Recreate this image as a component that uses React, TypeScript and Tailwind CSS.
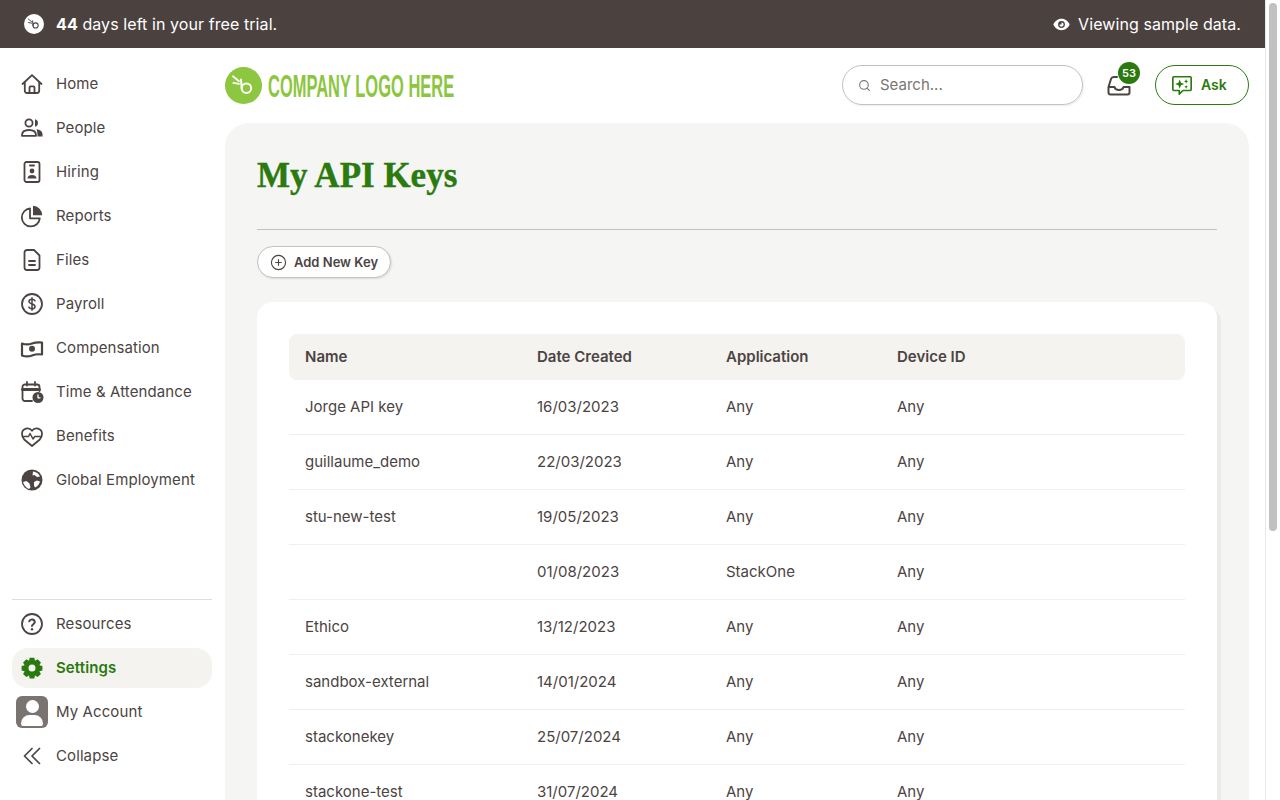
import { CirclePlus, Search } from "lucide-react";
import type { ReactNode } from "react";

const Icon = ({ children, className = "" }: { children: ReactNode; className?: string }) => (
  <svg viewBox="0 0 24 24" className={`w-6 h-6 ${className}`} fill="none" stroke="currentColor" strokeWidth="1.8" strokeLinecap="round" strokeLinejoin="round">
    {children}
  </svg>
);

const navIcons: Record<string, ReactNode> = {
  Home: (
    <Icon>
      <path d="M2.500 12 12 3.200 21.500 12" />
      <path d="M4.800 10.500v8.300a2.200 2.200 0 0 0 2.200 2.200h10a2.200 2.200 0 0 0 2.200-2.200v-8.300" />
      <path d="M9.500 21v-5.500a1.200 1.200 0 0 1 1.200-1.200h2.600a1.200 1.200 0 0 1 1.200 1.200V21" />
    </Icon>
  ),
  People: (
    <Icon>
      <circle cx="9" cy="7" r="3.600" />
      <path d="M2 19.200c0-3.600 3-5.200 7-5.200s7 1.600 7 5.200v.6H2z" />
      <path d="M15 3.300a3.800 3.800 0 0 1 0 7.400z" fill="currentColor" stroke="none" />
      <path d="M16.500 13.200c3.500.3 6 2 6 5v2.200h-5c0-3-.2-5-1-7.200z" fill="currentColor" stroke="none" />
    </Icon>
  ),
  Hiring: (
    <Icon>
      <rect x="4.500" y="2" width="15" height="20" rx="2" />
      <path d="M10 5.500h4" />
      <circle cx="12" cy="11" r="2.400" fill="currentColor" stroke="none" />
      <path d="M7.500 18.500c0-2.500 2-3.600 4.500-3.600s4.500 1.100 4.500 3.600z" fill="currentColor" stroke="none" />
    </Icon>
  ),
  Reports: (
    <Icon>
      <path d="M10 4.500a9 9 0 1 0 9.800 9.800H10z" />
      <path d="M13 1.800a9.500 9.500 0 0 1 9.200 9.500H13z" fill="currentColor" stroke="none" />
    </Icon>
  ),
  Files: (
    <Icon>
      <path d="M14 2H7a2.500 2.500 0 0 0-2.500 2.500v15A2.500 2.500 0 0 0 7 22h10a2.500 2.500 0 0 0 2.500-2.500V7.500z" />
      <path d="M9 13h6M9 17h6" />
    </Icon>
  ),
  Payroll: (
    <Icon>
      <circle cx="12" cy="12" r="10" />
      <path d="M15 8.800c-.5-1-1.600-1.600-3-1.600-1.700 0-3 .9-3 2.300 0 3.200 6 1.700 6 4.900 0 1.400-1.300 2.400-3 2.400-1.400 0-2.600-.6-3.100-1.700M12 5.800v12.400" strokeWidth="1.500" />
    </Icon>
  ),
  Compensation: (
    <Icon>
      <path d="M2 7.500c3.500 1.300 6.500 1.300 10 0s6.500-1.300 10-1v12c-3.500-.5-6.500-.3-10 1s-6.500 1.300-10 0z" strokeWidth="2.200" />
      <circle cx="12" cy="12.700" r="3" fill="currentColor" stroke="none" />
    </Icon>
  ),
  "Time & Attendance": (
    <Icon>
      <path d="M12 21H5a2.500 2.500 0 0 1-2.500-2.500V7A2.500 2.500 0 0 1 5 4.500h12A2.500 2.500 0 0 1 19.500 7v4" />
      <path d="M2.500 9.500h17" strokeWidth="3" />
      <path d="M7 2v3.500M15 2v3.500" />
      <circle cx="18" cy="17.500" r="5.500" fill="currentColor" stroke="none" />
      <path d="M18 15v2.800h2" stroke="#fff" strokeWidth="1.300" />
    </Icon>
  ),
  Benefits: (
    <Icon>
      <path d="M4.200 15.500C2.800 13.800 2 12.200 2 10a5.500 5.500 0 0 1 10-3.200A5.500 5.500 0 0 1 22 10c0 2.200-.8 3.800-2.200 5.500L12 22z" />
      <path d="M3.500 12.500h5l1.500-3 3 5.500 1.800-2.500h5.500" strokeWidth="1.500" />
    </Icon>
  ),
  "Global Employment": (
    <svg viewBox="0 0 24 24" className="w-6 h-6">
      <circle cx="12" cy="12" r="10.500" fill="currentColor" />
      <path d="M13 3.500c3 .3 5.800 2.300 7 5l-3 .5-2.500-2-2 .5zM3 14l3.500-1 3 2.500 1 4-1.500 1.500C6.500 20.200 4 17.500 3 14zM14 14l3-1.500 3 1c-.5 2.500-2.500 5-5 6l-1-2z" fill="#fff" />
    </svg>
  ),
};

const mainNav = ["Home", "People", "Hiring", "Reports", "Files", "Payroll", "Compensation", "Time & Attendance", "Benefits", "Global Employment"];

const apiKeys = [
  ["Jorge API key", "16/03/2023", "Any", "Any"],
  ["guillaume_demo", "22/03/2023", "Any", "Any"],
  ["stu-new-test", "19/05/2023", "Any", "Any"],
  ["", "01/08/2023", "StackOne", "Any"],
  ["Ethico", "13/12/2023", "Any", "Any"],
  ["sandbox-external", "14/01/2024", "Any", "Any"],
  ["stackonekey", "25/07/2024", "Any", "Any"],
  ["stackone-test", "31/07/2024", "Any", "Any"],
];

const NavItem = ({ icon, label, active }: { icon: ReactNode; label: string; active?: boolean }) => (
  <div className={`flex items-center h-11 px-2 ${active ? "text-[#2a7a0f]" : "text-[#4b4442]"}`}>
    <div className="w-6 flex justify-center shrink-0">{icon}</div>
    <span className={`ml-3 text-[15px] tracking-[0.1px] ${active ? "font-semibold" : ""}`}>{label}</span>
  </div>
);

const BambooMark = ({ stroke }: { stroke: string }) => (
  <g fill="none" stroke={stroke} strokeLinecap="round">
    <circle cx="16.200" cy="16" r="3.600" strokeWidth="1.500" />
    <path d="M12.600 16 12.100 9.500" strokeWidth="1.500" />
    <path d="M10.600 10.800 6 7M10.600 12.800 6.300 12" strokeWidth="1.300" />
  </g>
);

export default function App() {
  return (
    <div className="flex h-[800px] overflow-hidden bg-white font-['Inter',sans-serif] text-[#4b4442]">
      <div className="flex-1 min-w-0 flex flex-col">
        {/* Trial banner */}
        <div className="h-12 shrink-0 bg-[#4b4240] text-white flex items-center justify-between pl-6 pr-6 text-base tracking-[0.08px]">
          <div className="flex items-center gap-3">
            <svg viewBox="0 0 28 28" className="w-5 h-5">
              <circle cx="14" cy="14" r="14" fill="#fff" />
              <BambooMark stroke="#4b4240" />
            </svg>
            <span>
              <b className="font-bold">44</b> days left in your free trial.
            </span>
          </div>
          <div className="flex items-center gap-2">
            <svg viewBox="0 0 24 24" className="w-[17px] h-[17px]">
              <path fill="#fff" fillRule="evenodd" d="M12 4c5.500 0 9.500 3.500 11.500 8-2 4.500-6 8-11.500 8S2.500 16.500.5 12C2.500 7.500 6.500 4 12 4zm0 3.200a4.800 4.800 0 1 0 0 9.600 4.800 4.800 0 0 0 0-9.600z" />
              <path fill="#fff" d="M12 9a3 3 0 1 1-3 3h3z" />
            </svg>
            <span>Viewing sample data.</span>
          </div>
        </div>

        <div className="flex-1 min-h-0 flex">
          {/* Sidebar */}
          <aside className="w-[225px] shrink-0 flex flex-col pl-3 pr-[13px] pt-3.5 pb-[22px]">
            {mainNav.map((label) => (
              <NavItem key={label} label={label} icon={navIcons[label]} />
            ))}
            <div className="mt-auto border-t border-[#e0dedc] pt-0.5">
              <NavItem
                label="Resources"
                icon={
                  <Icon>
                    <circle cx="12" cy="12" r="10" />
                    <path d="M9.200 9.300a2.900 2.900 0 0 1 5.600.7c0 2-2.800 2.300-2.800 4" strokeWidth="2" />
                    <circle cx="12" cy="17.300" r="1.200" fill="currentColor" stroke="none" />
                  </Icon>
                }
              />
              <div className="bg-[#f4f3f0] rounded-2xl h-10 my-0.5 flex items-center">
                <div className="w-full -my-1">
                  <NavItem
                    active
                    label="Settings"
                    icon={
                      <svg viewBox="0 0 24 24" className="w-6 h-6" fill="currentColor">
                        <path fillRule="evenodd" d="M9.700 1.800h4.600l.7 3 2.700-1.500 3.200 3.200-1.500 2.700 3 .7v4.600l-3 .7 1.500 2.700-3.200 3.200-2.700-1.500-.7 3H9.700l-.7-3-2.700 1.500-3.200-3.200 1.500-2.700-3-.7V9.900l3-.7-1.500-2.700 3.200-3.200L9 4.800zM12 8.500a3.500 3.500 0 1 0 0 7 3.500 3.500 0 0 0 0-7z" />
                      </svg>
                    }
                  />
                </div>
              </div>
              <div className="flex items-center h-11 pl-1 text-[#4b4442]">
                <div className="w-8 h-8 rounded-md bg-[#7a7370] overflow-hidden flex flex-col items-center shrink-0">
                  <div className="w-[13px] h-[13px] rounded-full bg-white mt-1" />
                  <div className="w-[22px] h-[11px] rounded-t-[10px] bg-white mt-[2px] rounded-b-[3px]" />
                </div>
                <span className="ml-2 text-[15px] tracking-[0.1px]">My Account</span>
              </div>
              <NavItem
                label="Collapse"
                icon={
                  <Icon>
                    <path d="M12 4.500 4.500 12l7.500 7.500M19.500 4.500 12 12l7.500 7.500" strokeWidth="1.700" />
                  </Icon>
                }
              />
            </div>
          </aside>

          <main className="flex-1 min-w-0 flex flex-col pr-4">
            {/* Header */}
            <div className="h-[75px] shrink-0 flex items-center justify-between">
              <div className="flex items-center gap-[6px]">
                <svg viewBox="0 0 28 28" className="w-[37px] h-[37px]">
                  <circle cx="14" cy="14" r="14" fill="#8dc63f" />
                  <BambooMark stroke="#fff" />
                </svg>
                <div className="w-[186px] h-[28px] flex items-center">
                  <span className="text-[#8cc63f] text-[32px] leading-none font-bold font-['Liberation_Sans',sans-serif] origin-left scale-x-[0.515] whitespace-nowrap">
                    COMPANY LOGO HERE
                  </span>
                </div>
              </div>
              <div className="flex items-center -mt-[1px]">
                <div className="w-[241px] h-10 rounded-full border border-[#c4c1be] shadow-[1px_1px_2px_rgba(0,0,0,0.08)] flex items-center pl-[15px] text-[#777]">
                  <Search size={13} strokeWidth={2} />
                  <span className="ml-[9px] text-[15px] text-[#7a7472]">Search...</span>
                </div>
                <div className="relative w-6 h-6 ml-[24px]">
                  <svg viewBox="0 0 24 24" className="w-6 h-6" fill="none" stroke="#4b4442" strokeWidth="2" strokeLinecap="round" strokeLinejoin="round">
                    <path d="M1.500 14v5.500a2 2 0 0 0 2 2h17a2 2 0 0 0 2-2V14h-6c-.5 2-2.200 3-4.500 3s-4-1-4.500-3zM1.500 14 4 6a3 3 0 0 1 3-2h3" />
                  </svg>
                  <div className="absolute -top-[11px] left-[11px] w-[22px] h-[22px] rounded-full bg-[#2a7a0f] text-white text-[11px] font-semibold flex items-center justify-center">
                    53
                  </div>
                </div>
                <div className="ml-[24px] w-[94px] h-10 rounded-full border border-[#2a7a0f] text-[#2a7a0f] flex items-center pl-[15px] gap-[8px]">
                  <svg viewBox="0 0 24 24" className="w-[22px] h-[22px]" fill="none" stroke="currentColor" strokeWidth="1.800" strokeLinejoin="round">
                    <path d="M3 3h18a1 1 0 0 1 1 1v13a1 1 0 0 1-1 1h-8l-4 4v-4H3a1 1 0 0 1-1-1V4a1 1 0 0 1 1-1z" />
                    <path d="M9.500 6 10.900 9.600 14.500 11l-3.600 1.400-1.400 3.600-1.400-3.600L4.500 11l3.600-1.400zM16.500 5.500l.7 1.800 1.800.7-1.800.7-.7 1.800-.7-1.800-1.800-.7 1.800-.7zM16.500 12l.6 1.400 1.400.6-1.400.6-.6 1.400-.6-1.400-1.400-.6 1.400-.6z" fill="currentColor" stroke="none" />
                  </svg>
                  <span className="text-sm font-semibold">Ask</span>
                </div>
              </div>
            </div>

            {/* Panel */}
            <div className="flex-1 bg-[#f5f5f3] rounded-t-[24px] px-8 overflow-hidden">
              <div className="h-[107px] border-b border-[#c4c1be] pt-[31px]">
                <h1 className="font-['Liberation_Serif',serif] text-[#2a7a0f] text-[35px] leading-[44px] font-bold [-webkit-text-stroke:0.4px_#2a7a0f]">My API Keys</h1>
              </div>
              <button className="mt-4 h-8 w-[134px] rounded-full border border-[#c4c1be] bg-white shadow-[1px_1px_2px_rgba(0,0,0,0.1)] flex items-center pl-3 text-[#4b4442]">
                <CirclePlus size={17} strokeWidth={1.6} />
                <span className="ml-[7px] mt-0.5 text-[13px] font-semibold">Add New Key</span>
              </button>
              <div className="mt-6 bg-white rounded-t-2xl shadow-[4px_4px_0_#ecebe8] p-8 pb-0">
                <div className="h-[46px] bg-[#f4f3f0] rounded-lg grid grid-cols-[232px_189px_171px_1fr] items-center px-4 text-[15px] font-semibold text-[#4b4442]">
                  <div>Name</div>
                  <div>Date Created</div>
                  <div>Application</div>
                  <div>Device ID</div>
                </div>
                {apiKeys.map((row) => (
                  <div key={row[1]} className="h-[55px] border-b border-[#f0efed] grid grid-cols-[232px_189px_171px_1fr] items-center px-4 text-[15px] text-[#4b4442]">
                    {row.map((cell, i) => (
                      <div key={i}>{cell}</div>
                    ))}
                  </div>
                ))}
              </div>
            </div>
          </main>
        </div>
      </div>

      {/* Scrollbar */}
      <div className="w-[15px] shrink-0 bg-white border-l border-[#e8e8e8] flex justify-center pt-[3px]">
        <div className="w-2 h-[528px] rounded-full bg-[#c1c1c1]" />
      </div>
    </div>
  );
}
